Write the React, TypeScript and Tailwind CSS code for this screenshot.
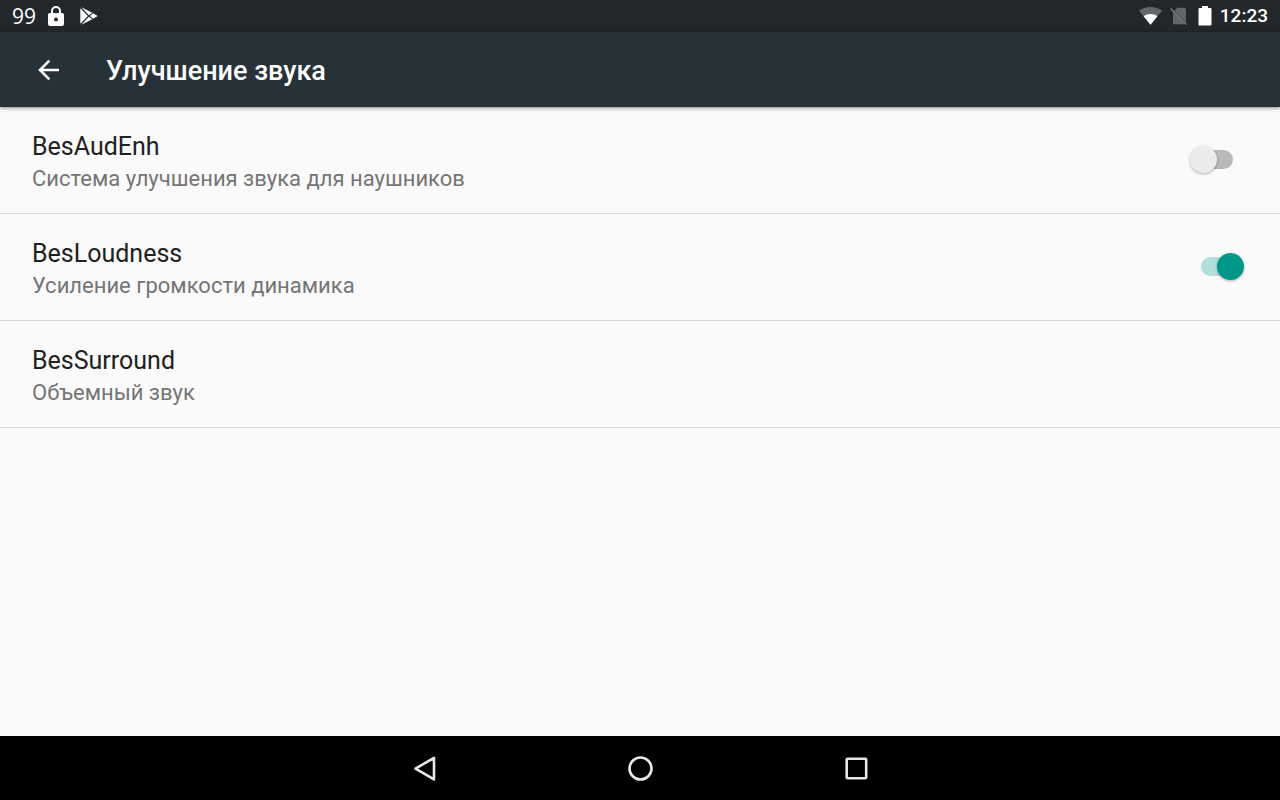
import { useState } from 'react';

type Effect = {
  id: string;
  title: string;
  summary: string;
  toggle?: boolean;
};

const effects: Effect[] = [
  { id: 'audenh', title: 'BesAudEnh', summary: 'Система улучшения звука для наушников', toggle: true },
  { id: 'loudness', title: 'BesLoudness', summary: 'Усиление громкости динамика', toggle: true },
  { id: 'surround', title: 'BesSurround', summary: 'Объемный звук' },
];

function StatusBar() {
  return (
    <div className="flex h-8 items-center justify-between bg-[#22272b] pl-3 pr-3 text-white">
      <div className="flex items-center gap-3">
        <span className="font-['Open_Sans',sans-serif] text-[21px] leading-8">99</span>
        <svg className="h-5 w-4" viewBox="0 0 16 20" fill="none" aria-hidden="true">
          <path d="M4 8V5a4 4 0 0 1 8 0v3" stroke="#fff" strokeWidth="2" />
          <path fillRule="evenodd" fill="#fff" d="M2 7h12a2 2 0 0 1 2 2v9a2 2 0 0 1-2 2H2a2 2 0 0 1-2-2V9a2 2 0 0 1 2-2zm6 4.500a2 2 0 1 0 0 4 2 2 0 0 0 0-4z" />
        </svg>
        <svg className="ml-1 h-[18px] w-[18px]" viewBox="0 0 18 18" fill="#fff" aria-hidden="true">
          <path d="M0.300 1.200L8 9 0.300 16.800z" />
          <path d="M1.300 0.300L12.300 5.700 9 8.300z" />
          <path d="M1.300 17.700L12.300 12.300 9 9.700z" />
          <path d="M13.200 6.200L17.600 9l-4.400 2.800L9.900 9z" />
        </svg>
      </div>
      <div className="flex items-center">
        <svg className="h-[18px] w-[23px]" viewBox="0 0 23 18" aria-hidden="true">
          <path d="M0 3.700C6.700-1.200 16.300-1.200 23 3.700L11.500 17.800z" fill="#63676a" />
          <path d="M4.600 9.200c4-3 9.800-3 13.800 0l-6.900 8.600z" fill="#fff" />
        </svg>
        <svg className="ml-2 h-[18px] w-[18px]" viewBox="0 0 18 18" aria-hidden="true">
          <path d="M7.500 0.800H14a2 2 0 0 1 2 2v12.400L4.400 3.600zM3 4.500l12.300 12.700H4.500A1.500 1.500 0 0 1 3 15.700z" fill="#63676a" />
          <path d="M0.700 1.500L16.600 17.500" stroke="#7b7e80" strokeWidth="1.500" />
        </svg>
        <svg className="ml-2.5 h-5 w-[14px]" viewBox="0 0 14 20" fill="#fff" aria-hidden="true">
          <path d="M4 0h6v2h2.500A1 1 0 0 1 13.500 3v15.500a1 1 0 0 1-1 1h-11a1 1 0 0 1-1-1V3a1 1 0 0 1 1-1H4z" />
        </svg>
        <time className="ml-2 text-[19px] font-medium leading-8">12:23</time>
      </div>
    </div>
  );
}

function Toolbar() {
  return (
    <header className="relative flex h-[75px] items-center bg-[#273238] pl-8 text-white shadow-[0_1px_4px_rgba(0,0,0,0.45)]">
      <button type="button" aria-label="Назад" className="flex h-8 w-8 items-center justify-center">
        <svg className="h-6 w-6" viewBox="0 0 24 24" fill="none" stroke="#fff" strokeWidth="2.600" aria-hidden="true">
          <path d="M23 12H4M13.300 2.700L4 12l9.300 9.300" />
        </svg>
      </button>
      <h1 className="ml-[42px] pt-0.5 text-[27px] font-medium leading-8">Улучшение звука</h1>
    </header>
  );
}

function Switch({ id, checked, onChange }: { id: string; checked: boolean; onChange: () => void }) {
  return (
    <input
      id={id}
      type="checkbox"
      role="switch"
      checked={checked}
      onChange={onChange}
      className="relative h-7 w-[54px] shrink-0 appearance-none before:absolute before:left-[11px] before:top-1 before:h-[19px] before:w-8 before:rounded-full before:bg-[#b9b9b9] after:absolute after:left-0 after:top-0 after:h-[27px] after:w-[27px] after:rounded-full after:bg-[#ececec] after:shadow-[0_1px_3px_rgba(0,0,0,0.3)] checked:before:bg-[#b2dfda] checked:after:left-[27px] checked:after:bg-[#009688]"
    />
  );
}

function NavBar() {
  return (
    <nav className="flex h-16 items-center justify-center gap-40 bg-black">
      <button type="button" aria-label="Назад" className="flex h-14 w-14 items-center justify-center">
        <svg className="h-7 w-7" viewBox="0 0 28 28" fill="none" stroke="#e8e8e8" strokeWidth="2.600" strokeLinejoin="round" aria-hidden="true">
          <path d="M24 3.800v21.600L5.500 14.600z" />
        </svg>
      </button>
      <button type="button" aria-label="Домой" className="flex h-14 w-14 items-center justify-center">
        <svg className="h-7 w-7" viewBox="0 0 28 28" fill="none" stroke="#e8e8e8" strokeWidth="2.600" aria-hidden="true">
          <circle cx="14.500" cy="14.500" r="11" />
        </svg>
      </button>
      <button type="button" aria-label="Обзор" className="flex h-14 w-14 items-center justify-center">
        <svg className="h-7 w-7" viewBox="0 0 28 28" fill="none" stroke="#e8e8e8" strokeWidth="2.600" aria-hidden="true">
          <rect x="4.700" y="4.700" width="19.500" height="19.500" rx="1" />
        </svg>
      </button>
    </nav>
  );
}

export default function App() {
  const [enabled, setEnabled] = useState<Record<string, boolean>>({ loudness: true });

  const toggle = (id: string) => setEnabled((prev) => ({ ...prev, [id]: !prev[id] }));

  return (
    <div className="flex min-h-screen flex-col bg-[#fafafa] font-[Roboto,sans-serif]">
      <StatusBar />
      <Toolbar />
      <main className="flex-1">
        <ul>
          {effects.map((e) => (
            <li key={e.id} className="flex items-center justify-between border-b border-[#dadada] pl-8 pr-9">
              <label htmlFor={e.toggle ? e.id : undefined} className="block pb-[18px] pt-6">
                <span className="block text-[25px] leading-8 text-[#212121]">{e.title}</span>
                <span className="block text-[22px] leading-8 text-[#757575]">{e.summary}</span>
              </label>
              {e.toggle && <Switch id={e.id} checked={!!enabled[e.id]} onChange={() => toggle(e.id)} />}
            </li>
          ))}
        </ul>
      </main>
      <NavBar />
    </div>
  );
}
